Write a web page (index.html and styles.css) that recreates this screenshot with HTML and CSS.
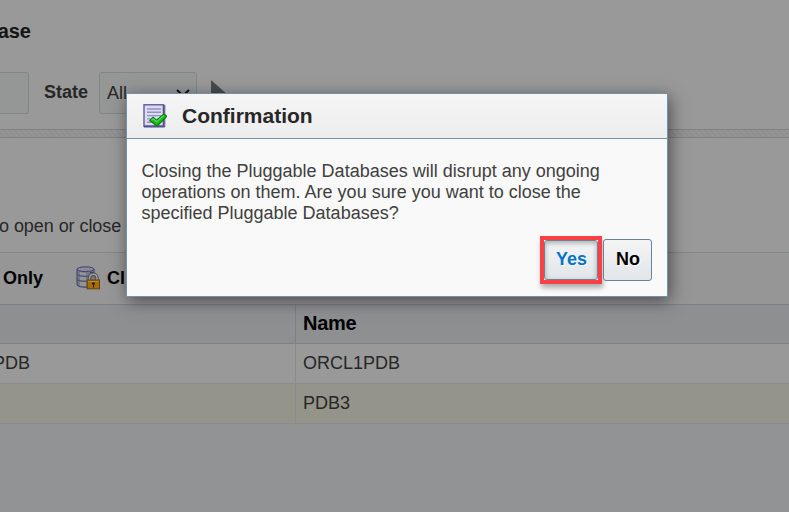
FILE: index.html
```html
<!DOCTYPE html>
<html lang="en">
<head>
<meta charset="utf-8">
<title>Confirmation</title>
<link rel="stylesheet" href="styles.css">
</head>
<body>
<main class="page">
  <header class="search">
    <h1 class="title">ase</h1>
    <div class="filters">
      <div class="field"></div>
      <span class="label">State</span>
      <div class="select"><span>All</span>
        <svg class="chevron" width="14" height="9" viewBox="0 0 14 9"><path d="M1 1l6 5.5 6-5.5" fill="none" stroke="#111" stroke-width="2"/></svg>
      </div>
      <svg class="go" width="19" height="30" viewBox="0 0 19 30"><path d="M0 0L17 15 0 30z" fill="#484b4d"/></svg>
    </div>
  </header>
  <div class="splitter"></div>
  <p class="hint">o open or close</p>
  <div class="toolbar">
    <span class="only">Only</span>
    <svg class="db-icon" width="25" height="25" viewBox="0 0 25 25">
      <path d="M1 3v16c2 3 14 3 17 0V3z" fill="#77778a" stroke="#414168"/>
      <path d="M4 6v14h6V7z" fill="#929299"/>
      <path d="M14 6h4v13h-4z" fill="#474766"/>
      <ellipse cx="9.5" cy="3.2" rx="8.5" ry="2.4" fill="#88889a" stroke="#414168"/>
      <path d="M1 8.5c3 2.4 14 2.4 17 0M1 13.5c3 2.4 14 2.4 17 0" fill="none" stroke="#4e4e70" stroke-width="1.2"/>
      <path d="M13.5 15v-3c0-5 7.5-5 7.5 0v3" fill="#77777b" stroke="#484848" stroke-width="3.4"/>
      <path d="M13.5 15v-3c0-5 7.5-5 7.5 0v3" fill="none" stroke="#a0a0a0" stroke-width="1.5"/>
      <rect x="11.2" y="14" width="12.3" height="8.8" fill="#a66a0a" stroke="#67400a"/>
      <path d="M12 15.5h10.5" stroke="#bd8b32"/>
      <path d="M16 16.5h3v2h-1v3h-1v-3h-1z" fill="#28200f"/>
    </svg>
    <span class="close">Cl</span>
  </div>
  <div class="table">
    <div class="row head"><span class="first"></span><span class="cell">Name</span></div>
    <div class="row"><span class="first">PDB</span><span class="cell">ORCL1PDB</span></div>
    <div class="row alt"><span class="first"></span><span class="cell">PDB3</span></div>
  </div>
</main>
<section class="dialog" role="dialog">
  <header class="dialog-head">
    <svg width="24" height="24" viewBox="0 0 24 24">
      <path d="M3 1h20v22H3z" fill="#c5c4d4"/>
      <path d="M1 .8h19.5v21.5H1z" fill="#dcdbf1" stroke="#67679c" stroke-width="1.5"/>
      <path d="M20.8 1v21.5H1" fill="none" stroke="#51518b" stroke-width="1.8"/>
      <path d="M4 5h14M4 8.3h14M4 11.6h14M4 14.9h8M4 18.2h5" stroke="#9591c2" stroke-width="1.4"/>
      <path d="M6.8 16.5l3.4-3.2 3.3 3L21 10l2.8 2.3-9.8 9.8z" fill="#18b817" stroke="#087c12" stroke-width="1.2"/>
      <path d="M8.4 16.2l2-1.5 3.2 3 7.4-6.2" fill="none" stroke="#55dc4c" stroke-width="1.2"/>
    </svg>
    <h2>Confirmation</h2>
  </header>
  <div class="message">
    <p>Closing the Pluggable Databases will disrupt any ongoing<br>operations on them. Are you sure you want to close the<br>specified Pluggable Databases?</p>
  </div>
  <div class="actions">
    <div class="focus"><button class="btn yes">Yes</button></div>
    <button class="btn no">No</button>
  </div>
</section>
</body>
</html>
```
FILE: styles.css
```css
* { box-sizing: border-box; }
body { margin: 0; width: 789px; height: 512px; overflow: hidden; background: #929395; font: 18px/21px "Liberation Sans", Arial, sans-serif; color: #272727; }
h1, h2, p { margin: 0; }
.page { height: 512px; }
.search { height: 129px; background: #999; padding-top: 18px; }
.title { width: 31px; height: 26px; display: flex; justify-content: flex-end; align-items: center; font-size: 20px; color: #141414; }
.filters { margin-top: 28px; display: flex; height: 42px; align-items: center; }
.field { width: 29px; height: 42px; border: 1px solid #828687; border-left: 0; border-radius: 0 3px 3px 0; background: #959797; }
.label { width: 55px; margin-left: 15px; font-weight: bold; line-height: 40px; height: 42px; }
.select { width: 98px; height: 42px; padding: 0 6px 0 7px; border: 1px solid #828687; border-radius: 3px; background: #959797; display: flex; align-items: center; justify-content: space-between; }
.go { margin-left: 14px; margin-top: 4px; }
.splitter { height: 9px; border-top: 1px solid #808182; border-bottom: 1px solid #808182; background: repeating-linear-gradient(45deg, #949494 0 2px, #909090 2px 4px); }
.hint { height: 114px; padding-top: 78px; text-indent: -1px; letter-spacing: -.06px; background: #999; }
.toolbar { height: 52px; border-top: 1px solid #7f878d; background: #969696; display: flex; align-items: center; font-weight: bold; color: #000; }
.only { width: 71px; padding-left: 3px; }
.db-icon { margin-left: 5px; }
.close { margin-left: 6px; }
.row { height: 40px; display: flex; background: #999; border-bottom: 1px solid #898c8f; line-height: 39px; }
.first { width: 296px; border-right: 1px solid #898c8f; }
.row:nth-child(2) .first { text-indent: -7px; }
.cell { padding-left: 7px; }
.head { background: #8d8f91; border-top: 1px solid #7a8085; border-bottom-color: #7e8184; font-size: 20px; line-height: 37px; font-weight: bold; color: #000; }
.head .cell { letter-spacing: -.3px; }
.head .first { border-color: #7e8184; }
.alt { background: #94948a; }
.dialog { position: absolute; left: 126px; top: 93px; width: 542px; height: 204px; border: 1px solid #7092ad; background: #f9f9f9; box-shadow: 2px 4px 16px rgba(0,0,0,.5); }
.dialog-head { height: 45px; border-bottom: 1px solid #7092ad; background: linear-gradient(#f5f5f5, #ededed); display: flex; align-items: center; gap: 15px; padding: 0 0 1px 16px; }
.dialog-head h2 { font-size: 21px; margin-top: -1px; }
.message { height: 97px; padding: 22px 0 0 14.5px; color: #404040; }
.actions { display: flex; justify-content: flex-end; gap: 1px; padding-right: 15px; }
.focus { width: 62px; height: 48px; border: 4px solid #f94046; background: #f9f9f9; box-shadow: 1px 4px 5px rgba(0,0,0,.3); }
.btn { font: bold 18px "Liberation Sans", Arial, sans-serif; padding: 0 0 2px; border: 1px solid #6a8298; border-radius: 3px; background: linear-gradient(#f3f4f4, #e2e6e9); color: #000; text-shadow: 1px 1px 0 #fff; }
.yes { width: 54px; height: 40px; padding-left: 1px; color: #0572ce; box-shadow: inset 0 2px 5px rgba(0,0,0,.3); }
.no { width: 49px; height: 42px; margin-top: 3px; padding-left: 1px; }
```
